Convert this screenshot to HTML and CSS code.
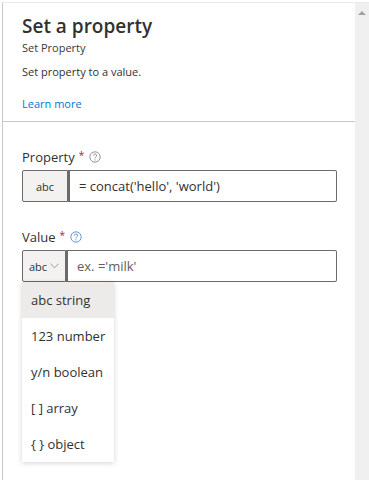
FILE: index.html
```html
<!DOCTYPE html>
<html lang="en">
<head>
    <meta charset="UTF-8">
    <meta name="viewport" content="width=device-width, initial-scale=1.0">
    <title>Set a property</title>
    <link rel="stylesheet" href="styles.css">
</head>
<body>
    <div class="frame">
        <div class="panel">
            <div class="panel-header">
                <h1>Set a property</h1>
                <div class="subtitle">Set Property</div>
                <p class="description">Set property to a value.</p>
                <a class="learn-more" href="#">Learn more</a>
            </div>

            <div class="panel-body">
                <div class="field">
                    <label class="field-label">Property <span class="required">*</span>
                        <svg class="help" viewBox="0 0 12 12" width="12" height="12">
                            <circle cx="6" cy="6" r="5.2" fill="none" stroke="currentColor" stroke-width="0.9"/>
                            <path d="M4.4 4.6a1.6 1.6 0 1 1 2.3 1.4c-0.5 0.3-0.7 0.6-0.7 1.1v0.3" fill="none" stroke="currentColor" stroke-width="0.9"/>
                            <circle cx="6" cy="8.9" r="0.6" fill="currentColor"/>
                        </svg>
                    </label>
                    <div class="input-row">
                        <div class="type-box">abc</div>
                        <div class="text-input">= concat('hello', 'world')</div>
                    </div>
                </div>

                <div class="field">
                    <label class="field-label">Value <span class="required">*</span>
                        <svg class="help help-active" viewBox="0 0 12 12" width="12" height="12">
                            <circle cx="6" cy="6" r="5.2" fill="none" stroke="currentColor" stroke-width="0.9"/>
                            <path d="M4.4 4.6a1.6 1.6 0 1 1 2.3 1.4c-0.5 0.3-0.7 0.6-0.7 1.1v0.3" fill="none" stroke="currentColor" stroke-width="0.9"/>
                            <circle cx="6" cy="8.9" r="0.6" fill="currentColor"/>
                        </svg>
                    </label>
                    <div class="input-row">
                        <div class="type-select">
                            <span>abc</span>
                            <svg class="chevron" viewBox="0 0 10 6" width="9" height="6">
                                <path d="M0.5 0.5 5 5 9.5 0.5" fill="none" stroke="currentColor" stroke-width="0.9"/>
                            </svg>
                            <ul class="type-menu">
                                <li class="selected">abc string</li>
                                <li>123 number</li>
                                <li>y/n boolean</li>
                                <li>[ ] array</li>
                                <li>{ } object</li>
                            </ul>
                        </div>
                        <div class="text-input placeholder">ex. ='milk'</div>
                    </div>
                </div>
            </div>
        </div>
        <div class="scrollbar">
            <span class="scroll-arrow"></span>
        </div>
    </div>
</body>
</html>
```

FILE: styles.css
```css
body {
    margin: 0;
    padding: 0;
    background: #ffffff;
    font-family: 'Open Sans', 'Noto Sans', sans-serif;
    color: #323130;
}

.frame {
    display: flex;
    height: 100vh;
    padding: 2px 0 0 2px;
    box-sizing: border-box;
}

.panel {
    flex: 1;
    border-left: 1px solid #c8c8c8;
    border-top: 1px solid #eaeaea;
}

.scrollbar {
    width: 14px;
    background: #f0f0f0;
    border-top: 1px solid #eaeaea;
    display: flex;
    justify-content: center;
    padding-top: 8px;
    box-sizing: border-box;
}

.scroll-arrow {
    width: 0;
    height: 0;
    border-left: 4px solid transparent;
    border-right: 4px solid transparent;
    border-bottom: 4px solid #a3a3a3;
}

.panel-header {
    padding: 9px 19px 8px;
    border-bottom: 1px solid #c8c8c8;
}

h1 {
    margin: 0;
    font-size: 19px;
    font-weight: 600;
    line-height: 28px;
    color: #323130;
}

.subtitle {
    font-size: 11px;
    font-weight: 500;
    line-height: 16px;
    color: #3b3a39;
}

.description {
    margin: 8px 0 11px;
    font-size: 11px;
    line-height: 16px;
}

.learn-more {
    font-size: 11px;
    line-height: 16px;
    color: #0078d4;
    text-decoration: none;
}

.panel-body {
    padding: 25px 18px 0 19px;
}

.field {
    margin-bottom: 25px;
}

.field-label {
    display: flex;
    align-items: center;
    gap: 4px;
    font-size: 13px;
    line-height: 20px;
    margin-bottom: 3px;
}

.required {
    color: #a4262c;
    font-size: 10px;
    align-self: flex-start;
    line-height: 16px;
}

.help {
    color: #8a8886;
    margin-left: 1px;
}

.help-active {
    color: #4f8ecf;
}

.input-row {
    display: flex;
    height: 32px;
}

.type-box {
    width: 46px;
    box-sizing: border-box;
    border: 1px solid #6b6b6b;
    border-radius: 2px 0 0 2px;
    background: #f3f2f1;
    display: flex;
    align-items: center;
    justify-content: center;
    font-size: 11px;
}

.type-select {
    position: relative;
    width: 44px;
    box-sizing: border-box;
    border: 1px solid #6b6b6b;
    border-radius: 2px 0 0 2px;
    background: #f3f2f1;
    display: flex;
    align-items: center;
    justify-content: center;
    gap: 3px;
    font-size: 11px;
}

.chevron {
    color: #8a8886;
}

.text-input {
    flex: 1;
    border: 1px solid #6b6b6b;
    border-left-width: 2px;
    border-radius: 0 2px 2px 0;
    padding-left: 9px;
    display: flex;
    align-items: center;
    font-size: 13px;
}

.placeholder {
    color: #605e5c;
}

.type-menu {
    position: absolute;
    top: 31px;
    left: -1px;
    width: 92px;
    margin: 0;
    padding: 0;
    list-style: none;
    background: #ffffff;
    box-shadow: 0 1px 5px rgba(0, 0, 0, 0.18);
    z-index: 2;
}

.type-menu li {
    height: 36px;
    line-height: 36px;
    padding-left: 9px;
    font-size: 13px;
    color: #323130;
}

.type-menu li.selected {
    background: #edebe9;
}
```
